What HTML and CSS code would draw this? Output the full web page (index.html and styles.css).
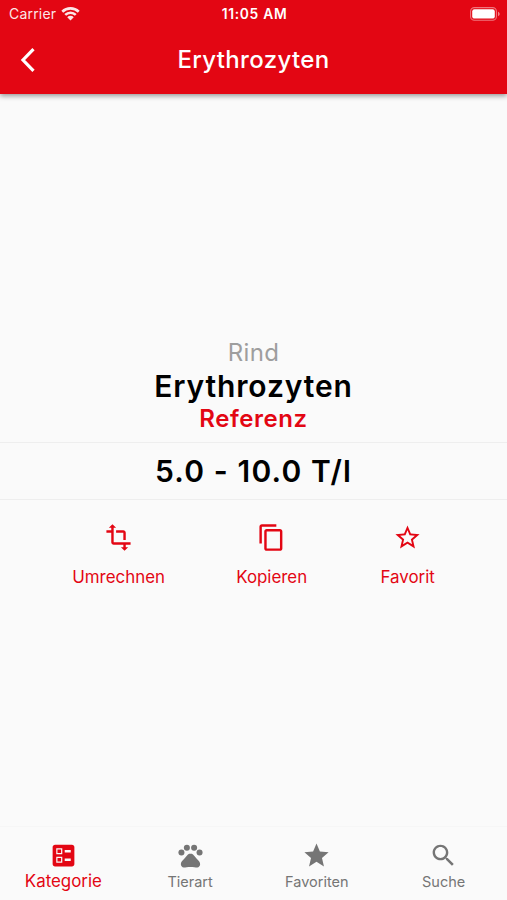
FILE: index.html
```
<!DOCTYPE html>
<html lang="de">
<head>
  <meta charset="UTF-8">
  <meta name="viewport" content="width=device-width, initial-scale=1.0">
  <title>Erythrozyten</title>
  <link rel="stylesheet" href="styles.css">
</head>
<body>
  <header class="header">
    <div class="status">
      <div class="carrier">
        <span>Carrier</span>
        <svg class="wifi" viewBox="0 0 18 14"><path d="M1.2 5.3a11.2 11.2 0 0 1 15.6 0M4 8.3a7.2 7.2 0 0 1 10 0" fill="none" stroke="#fff" stroke-width="2.5"/><path d="M9 13.6 5.9 10.5a4.4 4.4 0 0 1 6.2 0z" fill="#fff"/></svg>
      </div>
      <div class="time">11:05 AM</div>
      <svg class="battery" viewBox="0 0 30 14"><rect x=".6" y=".6" width="25.8" height="12.6" rx="3.8" fill="none" stroke="#fff" stroke-opacity=".45" stroke-width="1.1"/><rect x="2.2" y="2.2" width="22.6" height="9.4" rx="2.2" fill="#fff"/><path d="M28 4.8v4.4c1-.4 1.7-1.2 1.7-2.2S29 5.2 28 4.8z" fill="#fff" fill-opacity=".5"/></svg>
    </div>
    <div class="appbar">
      <svg class="back" viewBox="0 0 16 26"><path d="M13.5 2.2 3 13l10.5 10.8" fill="none" stroke="#fff" stroke-width="3.2"/></svg>
      <h1 class="title">Erythrozyten</h1>
    </div>
  </header>

  <main class="content">
    <div class="species">Rind</div>
    <div class="name">Erythrozyten</div>
    <div class="label">Referenz</div>
    <div class="value">5.0 - 10.0 T/l</div>
    <div class="actions">
      <div class="action">
        <svg class="icon" viewBox="0 0 24 24"><path d="M22 18v-2H8V4h2L7 1 4 4h2v2H2v2h4v8c0 1.1.9 2 2 2h8v2h-2l3 3 3-3h-2v-2h4zM10 8h6v6h2V8c0-1.1-.9-2-2-2h-6v2z"/></svg>
        <span>Umrechnen</span>
      </div>
      <div class="action copy">
        <svg class="icon" viewBox="0 0 24 24"><path d="M16 1H4c-1.1 0-2 .9-2 2v14h2V3h12V1zm3 4H8c-1.1 0-2 .9-2 2v14c0 1.1.9 2 2 2h11c1.1 0 2-.9 2-2V7c0-1.1-.9-2-2-2zm0 16H8V7h11v14z"/></svg>
        <span>Kopieren</span>
      </div>
      <div class="action">
        <svg class="icon" viewBox="0 0 24 24"><path d="M22 9.24l-7.19-.62L12 2 9.19 8.63 2 9.24l5.46 4.73L5.82 21 12 17.27 18.18 21l-1.63-7.03L22 9.24zM12 15.4l-3.76 2.27 1-4.28-3.32-2.88 4.38-.38L12 6.1l1.71 4.04 4.38.38-3.32 2.88 1 4.28L12 15.4z"/></svg>
        <span>Favorit</span>
      </div>
    </div>
  </main>

  <nav class="tabs">
    <div class="tab active">
      <svg class="icon" viewBox="0 0 24 24"><path d="M13 9.5h5v-2h-5v2zm0 7h5v-2h-5v2zm6 4.5H5c-1.1 0-2-.9-2-2V5c0-1.1.9-2 2-2h14c1.1 0 2 .9 2 2v14c0 1.1-.9 2-2 2zM6 11h5V6H6v5zm1-4h3v3H7V7zM6 18h5v-5H6v5zm1-4h3v3H7v-3z"/></svg>
      <span>Kategorie</span>
    </div>
    <div class="tab">
      <svg class="icon" viewBox="0 0 24 24"><circle cx="4.5" cy="9.5" r="2.5"/><circle cx="9" cy="5.5" r="2.5"/><circle cx="15" cy="5.5" r="2.5"/><circle cx="19.5" cy="9.5" r="2.5"/><path d="M17.34 14.86c-.87-1.02-1.6-1.89-2.48-2.91-.46-.54-1.05-1.08-1.75-1.32-.11-.04-.22-.07-.33-.09-.25-.04-.52-.04-.78-.04s-.53 0-.79.05c-.11.02-.22.05-.33.09-.7.24-1.28.78-1.75 1.32-.87 1.02-1.6 1.89-2.48 2.91-1.31 1.31-2.92 2.76-2.62 4.79.29 1.02 1.02 2.03 2.33 2.32.73.15 3.06-.44 5.54-.44h.18c2.48 0 4.81.58 5.54.44 1.31-.29 2.04-1.31 2.33-2.32.31-2.04-1.3-3.49-2.61-4.8z"/></svg>
      <span>Tierart</span>
    </div>
    <div class="tab">
      <svg class="icon" viewBox="0 0 24 24"><path d="M12 17.27L18.18 21l-1.64-7.03L22 9.24l-7.19-.61L12 2 9.19 8.63 2 9.24l5.46 4.73L5.82 21z"/></svg>
      <span>Favoriten</span>
    </div>
    <div class="tab">
      <svg class="icon" viewBox="0 0 24 24"><path d="M15.5 14h-.79l-.28-.27C15.41 12.59 16 11.11 16 9.5 16 5.91 13.09 3 9.5 3S3 5.91 3 9.5 5.91 16 9.5 16c1.61 0 3.09-.59 4.23-1.57l.27.28v.79l5 4.99L20.49 19l-4.99-5zm-6 0C7.01 14 5 11.99 5 9.5S7.01 5 9.5 5 14 7.01 14 9.5 11.99 14 9.5 14z"/></svg>
      <span>Suche</span>
    </div>
  </nav>
</body>
</html>
```
FILE: styles.css
```
html, body {
  margin: 0;
  padding: 0;
}
body {
  display: flex;
  flex-direction: column;
  height: 100vh;
  background: #fafafa;
  font-family: Inter, "Liberation Sans", sans-serif;
  overflow: hidden;
}
svg {
  display: block;
}
.header {
  height: 94px;
  background: #e30613;
  color: #fff;
  box-shadow: 0 2px 5px rgba(0, 0, 0, 0.4);
}
.status {
  display: grid;
  grid-template-columns: 1fr auto 1fr;
  align-items: center;
  height: 27px;
  padding: 0 7px 0 9px;
}
.carrier {
  display: flex;
  align-items: center;
  gap: 5px;
  font-size: 14px;
  letter-spacing: 0.2px;
  opacity: 0.9;
}
.wifi {
  width: 19px;
  height: 15px;
}
.time {
  font-size: 13.8px;
  font-weight: 600;
  letter-spacing: 0.7px;
}
.battery {
  width: 30px;
  height: 14px;
  justify-self: end;
}
.appbar {
  display: grid;
  grid-template-columns: 60px 1fr 60px;
  align-items: center;
  height: 65px;
}
.back {
  width: 16px;
  height: 26px;
  margin-left: 20px;
}
.title {
  margin: 0;
  text-align: center;
  font-size: 24px;
  font-weight: 500;
  letter-spacing: 0.35px;
}
.content {
  flex: 1;
  display: flex;
  flex-direction: column;
  justify-content: center;
  padding-top: 3px;
  text-align: center;
}
.species {
  padding-top: 2px;
  font-size: 24px;
  line-height: 30px;
  letter-spacing: 0.3px;
  color: #9e9e9e;
}
.name {
  font-size: 30px;
  line-height: 36px;
  font-weight: 600;
  letter-spacing: 0.85px;
}
.label {
  font-size: 24px;
  line-height: 30px;
  padding-bottom: 8px;
  font-weight: 600;
  letter-spacing: 0.55px;
  color: #e30613;
}
.value {
  border-top: 1px solid #eee;
  border-bottom: 1px solid #eee;
  font-size: 30px;
  line-height: 56px;
  font-weight: 600;
  letter-spacing: 1.15px;
}
.actions {
  display: flex;
  justify-content: space-evenly;
  padding-top: 23px;
  color: #e30613;
}
.action {
  display: flex;
  flex-direction: column;
  align-items: center;
  gap: 14px;
  font-size: 16.9px;
  line-height: 22px;
}
.copy {
  margin: 0 1px 0 -1px;
}
.icon {
  width: 29px;
  height: 29px;
  fill: currentColor;
}
.tabs {
  display: flex;
  height: 73px;
  border-top: 1px solid #f6f6f6;
  color: #757575;
}
.tab {
  flex: 1;
  display: flex;
  flex-direction: column;
  align-items: center;
  padding-top: 14px;
  font-size: 14.5px;
  line-height: 24px;
}
.active {
  font-size: 16.9px;
  line-height: 22px;
  color: #e30613;
}
```
